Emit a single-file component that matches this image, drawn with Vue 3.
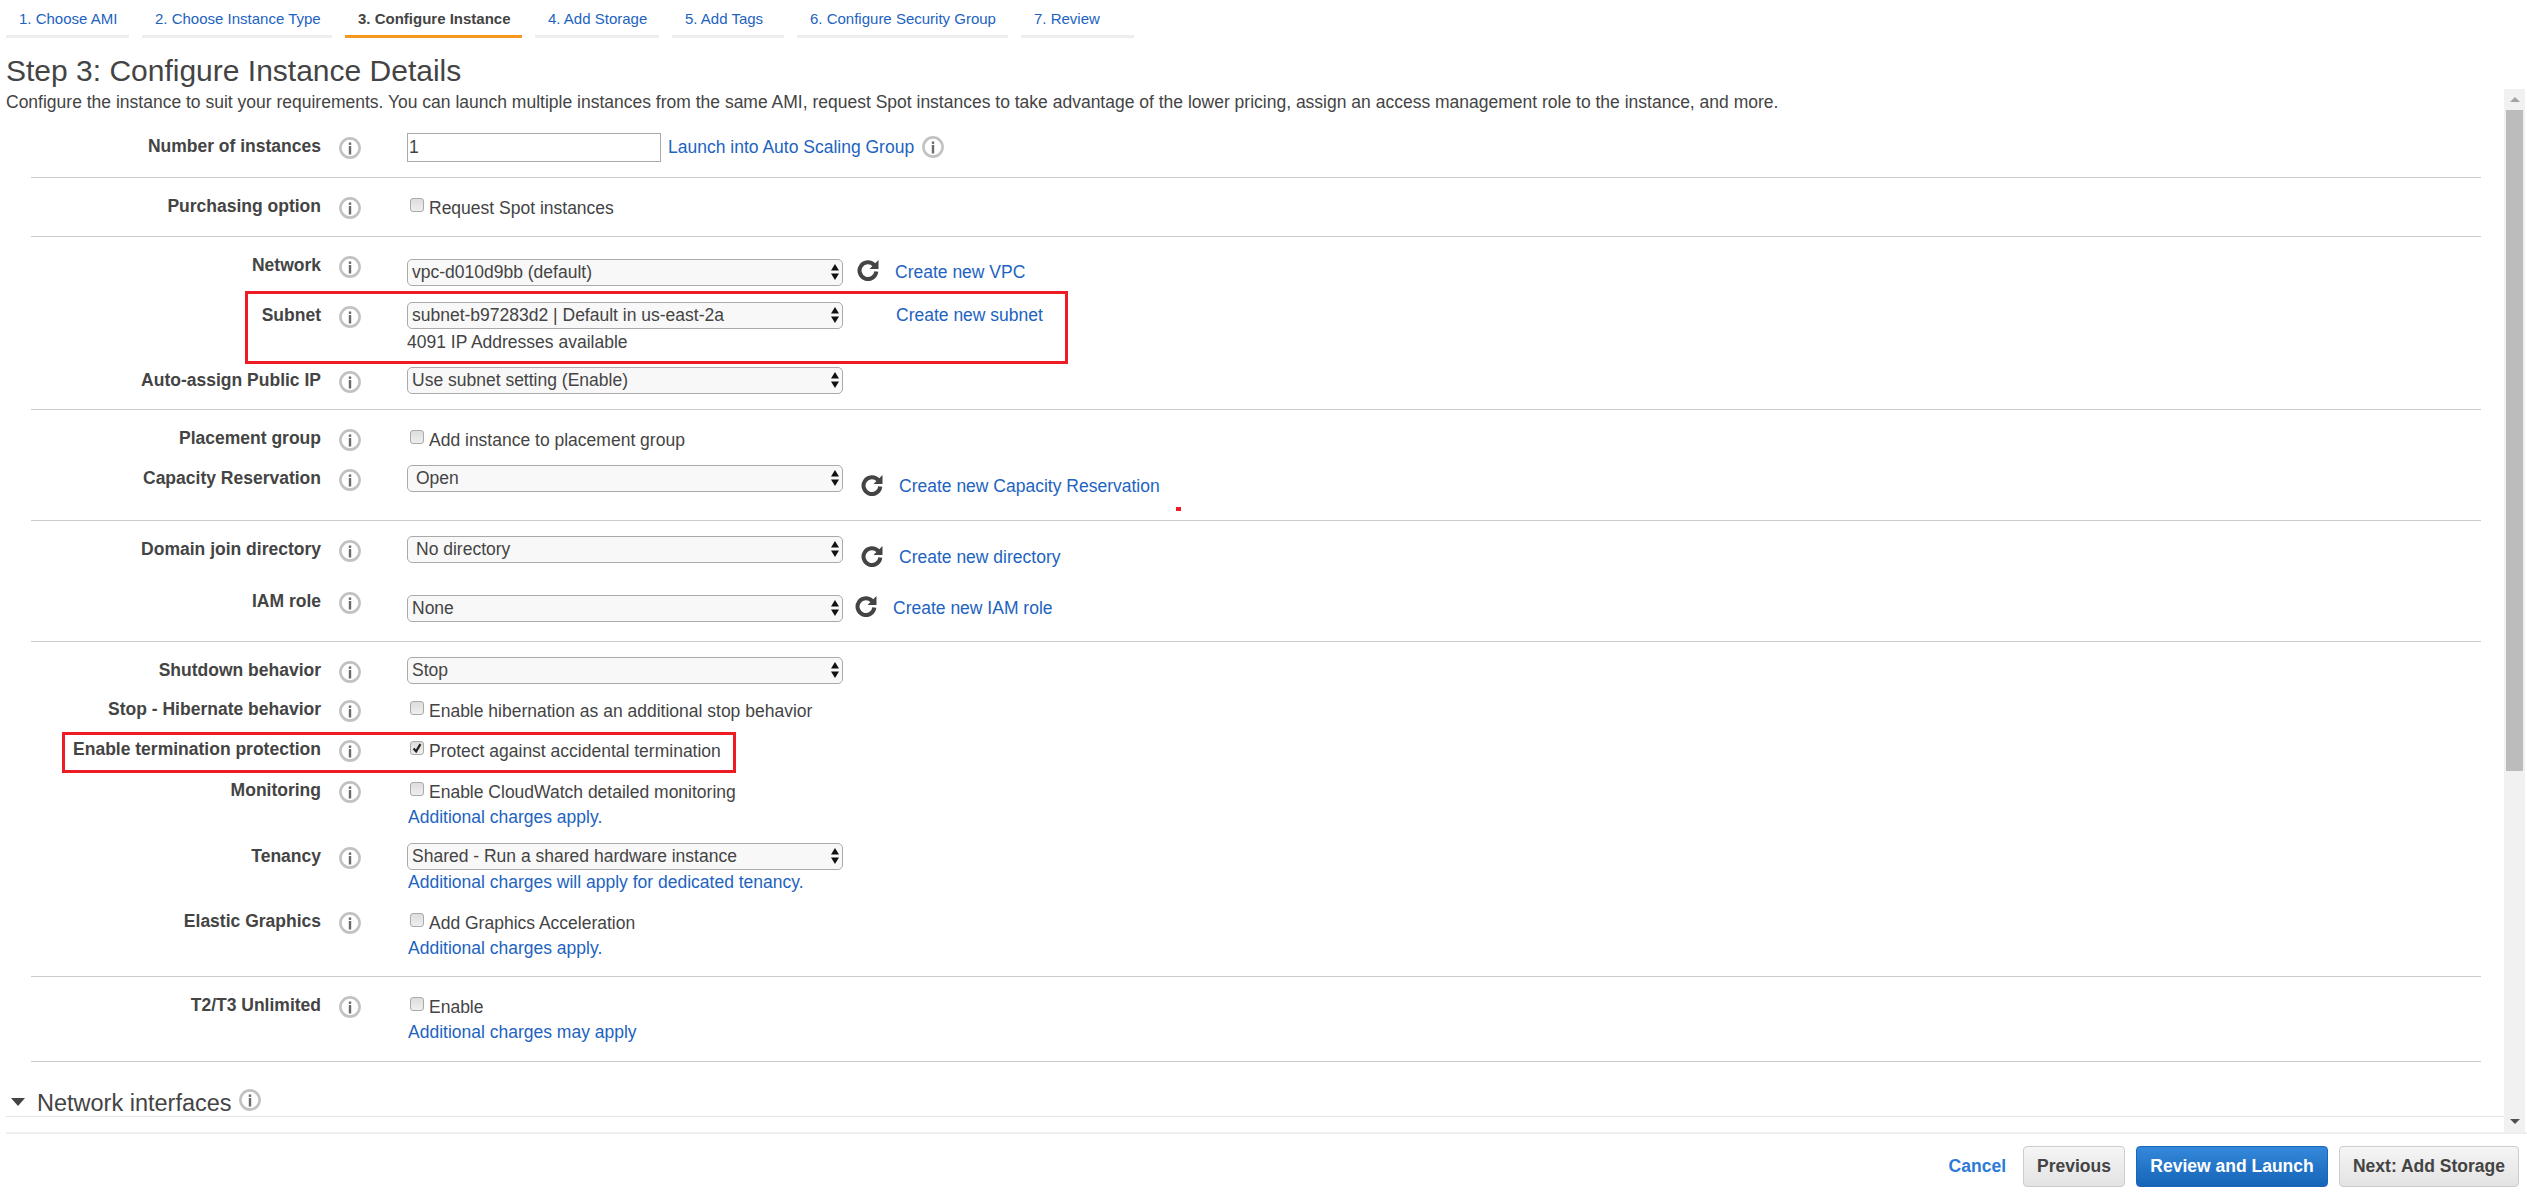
<script setup>
const tabs = [
  { text: '1. Choose AMI', w: 123 },
  { text: '2. Choose Instance Type', w: 190 },
  { text: '3. Configure Instance', w: 177, active: true },
  { text: '4. Add Storage', w: 124 },
  { text: '5. Add Tags', w: 112 },
  { text: '6. Configure Security Group', w: 211 },
  { text: '7. Review', w: 113 }
]

const items = [
  { label: 'Number of instances', h: 41, kind: 'input' },
  { hr: true },
  { label: 'Purchasing option', h: 40, kind: 'check', text: 'Request Spot instances' },
  { hr: true },
  { label: 'Network', h: 50, kind: 'select', value: 'vpc-d010d9bb (default)', low: true, refresh: 'a', link: 'Create new VPC' },
  { label: 'Subnet', h: 65, kind: 'select', value: 'subnet-b97283d2 | Default in us-east-2a', noIcon: true, link: 'Create new subnet', note: '4091 IP Addresses available' },
  { label: 'Auto-assign Public IP', h: 39, kind: 'select', value: 'Use subnet setting (Enable)' },
  { hr: true },
  { label: 'Placement group', h: 40, kind: 'check', text: 'Add instance to placement group' },
  { label: 'Capacity Reservation', h: 52, kind: 'select', value: 'Open', inset: true, refresh: 'b', link: 'Create new Capacity Reservation' },
  { hr: true },
  { label: 'Domain join directory', h: 52, kind: 'select', value: 'No directory', inset: true, refresh: 'b', link: 'Create new directory' },
  { label: 'IAM role', h: 50, kind: 'select', value: 'None', low: true, refresh: 'c', link: 'Create new IAM role' },
  { hr: true },
  { label: 'Shutdown behavior', h: 39, kind: 'select', value: 'Stop' },
  { label: 'Stop - Hibernate behavior', h: 40, kind: 'check', text: 'Enable hibernation as an additional stop behavior' },
  { label: 'Enable termination protection', h: 41, kind: 'check', checked: true, text: 'Protect against accidental termination' },
  { label: 'Monitoring', h: 66, kind: 'check', text: 'Enable CloudWatch detailed monitoring', sub: 'Additional charges apply.' },
  { label: 'Tenancy', h: 65, kind: 'select', value: 'Shared - Run a shared hardware instance', sub: 'Additional charges will apply for dedicated tenancy.' },
  { label: 'Elastic Graphics', h: 65, kind: 'check', text: 'Add Graphics Acceleration', sub: 'Additional charges apply.' },
  { hr: true },
  { label: 'T2/T3 Unlimited', h: 66, kind: 'check', text: 'Enable', sub: 'Additional charges may apply' },
  { hr: true }
]
</script>

<template>
  <div class="page">
    <nav class="tabs">
      <a
        v-for="t in tabs"
        :key="t.text"
        class="tab"
        :class="{ active: t.active }"
        :style="{ width: t.w + 'px' }"
      >{{ t.text }}</a>
    </nav>

    <h1 class="title">Step 3: Configure Instance Details</h1>

    <div class="body">
      <div class="content">
        <p class="desc">Configure the instance to suit your requirements. You can launch multiple instances from the same AMI, request Spot instances to take advantage of the lower pricing, assign an access management role to the instance, and more.</p>

        <div class="form">
          <template v-for="(it, i) in items" :key="i">
            <hr v-if="it.hr" class="rule" />
            <div v-else class="row" :style="{ height: it.h + 'px' }">
              <div class="label">{{ it.label }}</div>
              <svg class="info" viewBox="0 0 22 22">
                <circle cx="11" cy="11" r="9.6" fill="#fff" stroke="#c2c2c2" stroke-width="2.6" />
                <rect x="9.8" y="5.5" width="2.4" height="2.4" fill="#6a6a6a" />
                <rect x="9.8" y="9" width="2.4" height="8.5" fill="#6a6a6a" />
              </svg>

              <div class="control">
                <div v-if="it.kind === 'input'" class="inline input-row">
                  <div class="input">1</div>
                  <a class="link scale-link">Launch into Auto Scaling Group</a>
                  <svg class="info info-after" viewBox="0 0 22 22">
                    <circle cx="11" cy="11" r="9.6" fill="#fff" stroke="#c2c2c2" stroke-width="2.6" />
                    <rect x="9.8" y="5.5" width="2.4" height="2.4" fill="#6a6a6a" />
                    <rect x="9.8" y="9" width="2.4" height="8.5" fill="#6a6a6a" />
                  </svg>
                </div>

                <div v-else-if="it.kind === 'check'" class="check-row">
                  <span class="box" :class="{ on: it.checked }">
                    <svg v-if="it.checked" viewBox="0 0 14 14">
                      <path d="M3 7.5 L6 11 L11 2.5" fill="none" stroke="#222" stroke-width="2.6" />
                    </svg>
                  </span>
                  <span class="check-text">{{ it.text }}</span>
                </div>

                <div v-else class="inline" :class="{ 'sel-low': it.low, 'sel-high': !it.low }">
                  <div class="select" :class="{ inset: it.inset }">
                    <span>{{ it.value }}</span>
                    <svg class="arrows" viewBox="0 0 8 16">
                      <path d="M4 0 L8 6.5 H0 Z M4 16 L8 9.5 H0 Z" fill="#111" />
                    </svg>
                  </div>
                  <svg
                    v-if="it.refresh"
                    class="refresh"
                    :class="'refresh-' + it.refresh"
                    viewBox="0 0 22 22"
                  >
                    <path d="M17.3 6.2 A8.4 8.4 0 1 0 19.3 12.5" fill="none" stroke="#444" stroke-width="4" />
                    <path d="M21.5 1 V10 H12.5 Z" fill="#444" />
                  </svg>
                  <a
                    v-if="it.link"
                    class="link side-link"
                    :class="{ 'side-plain': it.noIcon, 'side-icon': it.refresh }"
                  >{{ it.link }}</a>
                </div>

                <div v-if="it.note" class="note">{{ it.note }}</div>
                <a v-if="it.sub" class="link sub" :class="{ 'sub-sel': it.kind === 'select' }">{{ it.sub }}</a>
              </div>
            </div>
          </template>
        </div>

        <div class="section">
          <span class="caret"></span>
          <span class="section-title">Network interfaces</span>
          <svg class="info info-section" viewBox="0 0 22 22">
            <circle cx="11" cy="11" r="9.6" fill="#fff" stroke="#c2c2c2" stroke-width="2.6" />
            <rect x="9.8" y="5.5" width="2.4" height="2.4" fill="#6a6a6a" />
            <rect x="9.8" y="9" width="2.4" height="8.5" fill="#6a6a6a" />
          </svg>
        </div>
      </div>

      <div class="scrollbar">
        <div class="sb-btn"><span class="sb-up"></span></div>
        <div class="sb-track"><div class="sb-thumb"></div></div>
        <div class="sb-btn sb-btn-down"><span class="sb-down"></span></div>
      </div>
    </div>

    <footer class="footer">
      <a class="cancel">Cancel</a>
      <button class="btn prev">Previous</button>
      <button class="btn primary">Review and Launch</button>
      <button class="btn next">Next: Add Storage</button>
    </footer>

    <div class="mark mark-subnet"></div>
    <div class="mark mark-term"></div>
    <div class="dot"></div>
  </div>
</template>

<style>
html, body { margin: 0; background: #fff; overflow: hidden; }
</style>

<style scoped>
.page {
  position: relative;
  width: 2527px;
  height: 1204px;
  overflow: hidden;
  background: #fff;
  font-family: "Liberation Sans", Arial, sans-serif;
  font-size: 17.5px;
  color: #444;
}

.tabs {
  display: flex;
  gap: 13px;
  height: 38px;
  padding-left: 6px;
}
.tab {
  box-sizing: border-box;
  height: 38px;
  line-height: 38px;
  padding-left: 13px;
  font-size: 15px;
  color: #1d63c0;
  border-bottom: 3px solid #eee;
  white-space: nowrap;
}
.tab.active {
  font-weight: bold;
  color: #444;
  border-bottom-color: #f7971e;
}

.title {
  margin: 16px 0 1px 6px;
  height: 34px;
  line-height: 34px;
  font-size: 30px;
  font-weight: normal;
  color: #444;
}

.body {
  display: flex;
  height: 1043px;
  box-sizing: content-box;
}
.content {
  flex: 0 0 2504px;
  width: 2504px;
  min-width: 0;
}
.desc {
  margin: 3px 0 0 6px;
  height: 20px;
  line-height: 20px;
  white-space: nowrap;
  font-size: 17.5px;
  color: #444;
}
.form {
  margin-top: 24px;
  padding-left: 31px;
  padding-right: 23px;
}
.rule {
  border: 0;
  height: 1px;
  margin: 0 0 18px;
  background: #ccc;
}
.rule:last-child { margin-bottom: 0; }
.row {
  display: flex;
  align-items: flex-start;
}
.label {
  width: 290px;
  flex: none;
  text-align: right;
  font-weight: bold;
  line-height: 20px;
  white-space: nowrap;
  color: #444;
}
.info {
  flex: none;
  width: 22px;
  height: 22px;
  margin: 1px 0 0 18px;
}
.control {
  flex: 1;
  margin-left: 46px;
  min-width: 0;
}
.inline {
  display: flex;
  align-items: flex-start;
}
.input-row { margin-top: -3px; }
.sel-high { margin-top: -3px; }
.sel-low { margin-top: 4px; }
.input {
  box-sizing: border-box;
  width: 254px;
  height: 29px;
  line-height: 27px;
  padding-left: 1px;
  border: 1px solid #aaa;
  background: #fff;
}
.scale-link {
  margin: 2px 0 0 7px;
  line-height: 24px;
}
.info-after { margin: 3px 0 0 8px; }
.link { color: #1d63c0; white-space: nowrap; }
.check-row {
  display: flex;
  align-items: flex-start;
  margin-top: 2px;
  height: 20px;
  padding-left: 3px;
}
.box {
  box-sizing: border-box;
  width: 14px;
  height: 14px;
  flex: none;
  margin-top: 0;
  border: 1px solid #aaa;
  border-radius: 3px;
  background: linear-gradient(#ddd, #eee);
  display: block;
}
.box svg { display: block; width: 12px; height: 12px; }
.check-text {
  margin-left: 5px;
  line-height: 20px;
  white-space: nowrap;
  color: #444;
}
.select {
  box-sizing: border-box;
  position: relative;
  width: 436px;
  height: 27px;
  line-height: 24px;
  padding-left: 4px;
  border: 1px solid #aaa;
  border-radius: 5px;
  background: #f8f8f8;
  white-space: nowrap;
  color: #444;
  flex: none;
}
.select.inset { padding-left: 8px; line-height: 25px; }
.arrows {
  position: absolute;
  right: 3px;
  top: 4px;
  width: 8px;
  height: 16px;
}
.refresh {
  flex: none;
  width: 22px;
  height: 22px;
  margin: 0 0 0 14px;
}
.refresh-b { margin: 9px 0 0 18px; }
.refresh-c { margin: 0 0 0 12px; }
.side-link { line-height: 24px; }
.side-icon { margin: 1px 0 0 16px; }
.refresh-b + .side-icon { margin-top: 9px; }
.refresh-c + .side-icon { margin-left: 16px; }
.side-plain { margin: 0 0 0 53px; line-height: 27px; }
.note {
  margin-top: 3px;
  line-height: 20px;
  color: #444;
}
.sub {
  display: block;
  margin: 5px 0 0 1px;
  line-height: 20px;
}
.sub-sel { margin-top: 2px; }

.section {
  display: flex;
  align-items: flex-start;
  height: 54px;
  margin: 0 0 0 6px;
  border-bottom: 1px solid #e6e6e6;
  box-sizing: content-box;
}
.caret {
  width: 0;
  height: 0;
  margin: 36px 0 0 5px;
  border-left: 7px solid transparent;
  border-right: 7px solid transparent;
  border-top: 8px solid #444;
}
.section-title {
  margin: 28px 0 0 12px;
  font-size: 23.5px;
  line-height: 26px;
  color: #444;
  white-space: nowrap;
}
.info-section { margin: 27px 0 0 7px; }

.scrollbar {
  display: flex;
  flex-direction: column;
  width: 21px;
  background: #f1f1f1;
}
.sb-btn {
  height: 21px;
  display: flex;
  align-items: center;
  justify-content: center;
}
.sb-btn-down { margin-top: auto; }
.sb-up, .sb-down {
  width: 0;
  height: 0;
  border-left: 5px solid transparent;
  border-right: 5px solid transparent;
}
.sb-up { border-bottom: 5px solid #a3a3a3; }
.sb-down { border-top: 5px solid #505050; }
.sb-track { padding: 0 2px; }
.sb-thumb { height: 661px; background: #bcbcbc; }

.footer {
  display: flex;
  align-items: flex-start;
  justify-content: flex-end;
  border-top: 2px solid #eee;
  margin-left: 6px;
  padding: 12px 8px 0 0;
}
.cancel {
  font-weight: bold;
  color: #2b7ad6;
  line-height: 41px;
  margin-right: 6px;
}
.btn {
  box-sizing: border-box;
  height: 41px;
  margin-left: 11px;
  border-radius: 4px;
  font-family: inherit;
  font-size: 17.5px;
  font-weight: bold;
  padding: 0;
  cursor: pointer;
}
.prev, .next {
  color: #444;
  border: 1px solid #ccc;
  background: linear-gradient(#f5f5f5, #e3e3e3);
}
.prev { width: 102px; }
.next { width: 180px; }
.primary {
  width: 192px;
  color: #fff;
  border: 1px solid #1a66b8;
  background: linear-gradient(#3488da, #1564b8);
}

.mark {
  position: absolute;
  box-sizing: border-box;
  border: 3px solid #ed1c24;
}
.mark-subnet { left: 245px; top: 291px; width: 823px; height: 73px; }
.mark-term { left: 62px; top: 732px; width: 674px; height: 41px; }
.dot {
  position: absolute;
  left: 1176px;
  top: 507px;
  width: 5px;
  height: 4px;
  background: #ed1c24;
}
</style>
